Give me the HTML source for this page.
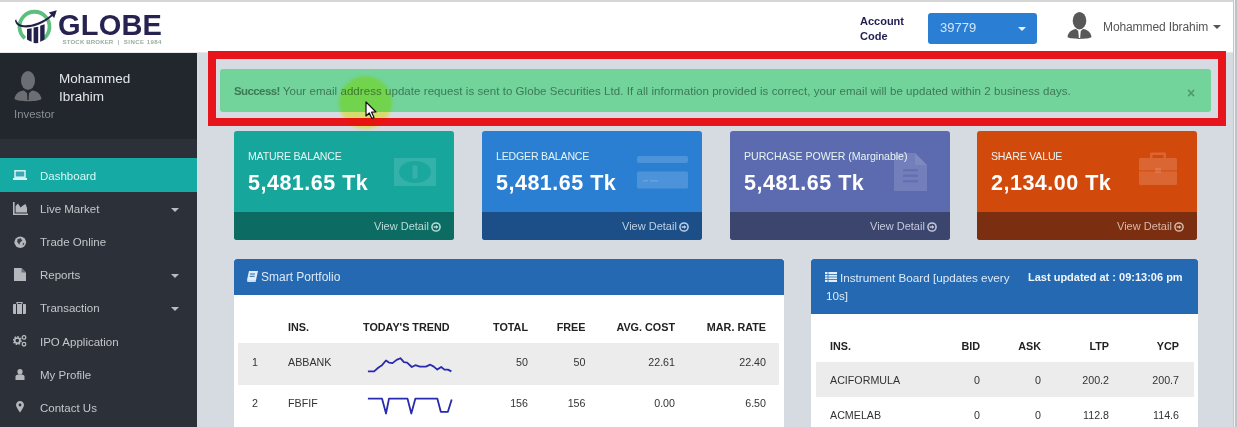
<!DOCTYPE html>
<html><head><meta charset="utf-8">
<style>
*{box-sizing:border-box;margin:0;padding:0}
html,body{width:1237px;height:427px;overflow:hidden;background:#d6dbe1;font-family:"Liberation Sans",sans-serif}
.abs{position:absolute}
.t{position:absolute;white-space:nowrap;line-height:1}
#topline{left:0;top:0;width:1237px;height:2px;background:#d6d6d6}
#header{left:0;top:2px;width:1234px;height:51px;background:#fff;border-bottom:1px solid #e4e6e9}
#sb{left:0;top:53px;width:197px;height:374px;background:#2c3139}
#sbuser{left:0;top:53px;width:197px;height:86px;background:#22272d}
#scroll{left:1235px;top:0;width:2px;height:427px;background:#bfc3c8}
#scrollline{left:1233px;top:0;width:2px;height:427px;background:#f2f3f5;border-left:1px solid #c3c8ce}
.menu{color:#c3c6ca;font-size:11.5px}
.mi{position:absolute;left:13px}
.caret{position:absolute;width:0;height:0;border-left:4px solid transparent;border-right:4px solid transparent;border-top:4px solid #b9bdc2}
.card .lbl{color:#e6f4f2;font-size:10.6px;letter-spacing:-0.2px}
.val{color:#fff;font-size:21.5px;font-weight:700;letter-spacing:0.5px}
.vd{color:#c9d6d6;font-size:11px}
.th{color:#222;font-size:10.8px;font-weight:700}
.td{color:#333;font-size:10.7px}
</style></head><body>
<div id="topline" class="abs"></div>
<div id="header" class="abs"></div>
<div id="sb" class="abs"></div>
<div id="sbuser" class="abs"></div>
<div id="scrollline" class="abs"></div>
<div id="scroll" class="abs"></div>

<!-- LOGO -->
<svg class="abs" style="left:0;top:0" width="60" height="50" viewBox="0 0 60 50">
  <path d="M24.9 38.3 A15 15 0 1 1 44.1 38.3" fill="none" stroke="#5cbf7e" stroke-width="3.8"/>
  <path d="M27 29 L31.6 28.2 L31.6 41.8 Q29 41 27 39.5 Z" fill="#22204a"/>
  <path d="M33.6 27.6 L38.2 26.8 L38.2 43 Q35.8 43.3 33.6 43 Z" fill="#22204a"/>
  <path d="M40.2 25.8 L44.6 24.2 L44.6 39.8 Q42.6 41 40.2 41.8 Z" fill="#22204a"/>
  <path d="M16.2 19.2 C17 27.5 34 28.5 51.5 14.5 L52.6 16 C35 31 16 30 15 20.5 Z" fill="#22204a"/>
  <path d="M56.8 10.2 L48.8 12.6 L54.2 18 Z" fill="#22204a"/>
</svg>
<div class="t" style="left:58px;top:11px;font-size:29px;font-weight:700;color:#262350;letter-spacing:0.2px">GLOBE</div>
<div class="t" style="left:62.6px;top:38.8px;font-size:6.1px;color:#96ad9e;letter-spacing:0.12px;font-weight:700">STOCK BROKER</div>
<div class="t" style="left:117.5px;top:38.8px;font-size:6.1px;color:#a5b3ab;font-weight:700">|</div>
<div class="t" style="left:123.8px;top:38.8px;font-size:6.1px;color:#96ad9e;letter-spacing:0.42px;font-weight:700">SINCE 1984</div>

<!-- Account code -->
<div class="t" style="left:860px;top:14px;font-size:11px;font-weight:700;color:#211d52;line-height:15px">Account<br>Code</div>
<div class="abs" style="left:928px;top:13px;width:109px;height:31px;background:#2a7fd4;border-radius:3px"></div>
<div class="t" style="left:940px;top:21px;font-size:13px;color:#d3e5f7">39779</div>
<div class="caret" style="left:1018px;top:27px;border-top-color:#e8f0fa;border-left-width:4px;border-right-width:4px;border-top-width:4px"></div>

<!-- user avatar header -->
<svg class="abs" style="left:1067px;top:11px" width="25" height="30" viewBox="0 0 25 30">
  <ellipse cx="12.5" cy="9.7" rx="6.8" ry="8.7" fill="#585858"/>
  <path d="M0.5 26 C1 21, 5 18.5, 9 18 L12.5 21 L16 18 C20 18.5, 24 21, 24.5 26 C22 28.5, 3 28.5, 0.5 26 Z" fill="#585858"/>
  <path d="M11.3 19.5 L13.7 19.5 L13.2 27 L11.8 27 Z" fill="#fff"/>
</svg>
<div class="t" style="left:1103px;top:21px;font-size:12px;color:#555;letter-spacing:-0.1px">Mohammed Ibrahim</div>
<div class="caret" style="left:1213px;top:25px;border-top-color:#555"></div>

<!-- SIDEBAR user -->
<svg class="abs" style="left:14px;top:71px" width="28" height="32" viewBox="0 0 28 32">
  <ellipse cx="14" cy="9.5" rx="7" ry="9.5" fill="#6b6e72"/>
  <path d="M0.5 28 C1 23, 5 20, 10 19.5 L14 23 L18 19.5 C23 20, 27 23, 27.5 28 C25 31, 3 31, 0.5 28 Z" fill="#6b6e72"/>
  <path d="M13 21 L15 21 L14.6 29 L13.4 29 Z" fill="#22272d"/>
</svg>
<div class="t" style="left:59px;top:70px;font-size:13.5px;color:#e3e5e8;line-height:18px">Mohammed<br>Ibrahim</div>
<div class="t" style="left:14px;top:109px;font-size:11.4px;color:#8a8e93">Investor</div>

<!-- SIDEBAR menu -->
<div class="abs" style="left:0;top:158px;width:197px;height:34px;background:#15aaa3"></div>
<svg class="abs" style="left:13px;top:170px" width="14" height="10" viewBox="0 0 14 10">
  <rect x="2" y="0.8" width="10" height="6.4" fill="#3aa7b5" stroke="#d5f4f4" stroke-width="1.5"/>
  <rect x="0" y="8" width="14" height="2" fill="#d5f4f4"/>
</svg>
<div class="t menu" style="left:40px;top:171px;color:#d9f6f6">Dashboard</div>

<svg class="abs" style="left:13px;top:201.5px" width="15" height="13" viewBox="0 0 15 13"><path d="M0 0 L1.6 0 L1.6 11.4 L15 11.4 L15 13 L0 13Z M2.6 10.6 L2.6 4 L5 1.5 L7.5 5.5 L10 3.5 L12.5 2 L14 6 L14 10.6 Z" fill="#b4b8bd"/></svg>
<div class="t menu" style="left:40px;top:204.1px">Live Market</div>
<div class="caret" style="left:171px;top:208px"></div>

<svg class="abs" style="left:14px;top:236px" width="12.5" height="12.5" viewBox="0 0 12 12"><circle cx="6" cy="6" r="5.6" fill="#b4b8bd"/><path d="M3.5 2.8 L6.5 2.2 L8 4.5 L6 6 L5 8.5 L3 5.5 Z M8.5 6.5 L10 7 L8.5 9.5 Z" fill="#3a3f47"/></svg>
<div class="t menu" style="left:40px;top:237.2px">Trade Online</div>

<svg class="abs" style="left:14px;top:267.5px" width="12" height="13.5" viewBox="0 0 12 13.5"><path d="M0 0 L7.5 0 L12 4.5 L12 13.5 L0 13.5 Z" fill="#b4b8bd"/><path d="M7.5 0 L7.5 4.5 L12 4.5 Z" fill="#6d7278"/></svg>
<div class="t menu" style="left:40px;top:270.3px">Reports</div>
<div class="caret" style="left:171px;top:274px"></div>

<svg class="abs" style="left:13px;top:302px" width="13" height="12" viewBox="0 0 13 12"><path d="M4 2 L4 0.5 L9 0.5 L9 2" fill="none" stroke="#b4b8bd" stroke-width="1.2"/><rect x="0" y="2" width="13" height="10" rx="1" fill="#b4b8bd"/><rect x="3" y="2" width="1" height="10" fill="#2b3038"/><rect x="9" y="2" width="1" height="10" fill="#2b3038"/></svg>
<div class="t menu" style="left:40px;top:303.4px">Transaction</div>
<div class="caret" style="left:171px;top:307px"></div>

<svg class="abs" style="left:13px;top:335px" width="14" height="12" viewBox="0 0 14 12"><circle cx="4.3" cy="5.6" r="3.4" fill="none" stroke="#b4b8bd" stroke-width="2.2" stroke-dasharray="1.5 1.1"/><circle cx="4.3" cy="5.6" r="2.6" fill="none" stroke="#b4b8bd" stroke-width="1.6"/><circle cx="11" cy="2.4" r="1.8" fill="none" stroke="#b4b8bd" stroke-width="1.3"/><circle cx="11" cy="9.2" r="1.8" fill="none" stroke="#b4b8bd" stroke-width="1.3"/></svg>
<div class="t menu" style="left:40px;top:336.5px">IPO Application</div>

<svg class="abs" style="left:15px;top:368.5px" width="10" height="11" viewBox="0 0 10 11"><ellipse cx="5" cy="2.8" rx="2.6" ry="2.8" fill="#b4b8bd"/><path d="M0.5 11 L0.5 7.6 C0.5 6.2 2 5.4 3.3 5.4 L6.7 5.4 C8 5.4 9.5 6.2 9.5 7.6 L9.5 11 Z" fill="#b4b8bd"/></svg>
<div class="t menu" style="left:40px;top:369.6px">My Profile</div>

<svg class="abs" style="left:16px;top:401px" width="8" height="11.5" viewBox="0 0 9 13"><path d="M4.5 0 C7 0 9 2 9 4.5 C9 7 4.5 13 4.5 13 C4.5 13 0 7 0 4.5 C0 2 2 0 4.5 0 Z" fill="#b4b8bd"/><circle cx="4.5" cy="4.5" r="1.6" fill="#2b3038"/></svg>
<div class="t menu" style="left:40px;top:402.7px">Contact Us</div>

<!-- red box -->
<div class="abs" style="left:208px;top:51px;width:1018px;height:75px;border:8px solid #e8141c"></div>
<!-- alert -->
<div class="abs" style="left:220px;top:69px;width:991px;height:43px;background:#72d39b;border-radius:3px"></div>
<div class="t" style="left:234px;top:86px;font-size:11.5px;letter-spacing:0.055px;color:#3b7a55"><b style="letter-spacing:-0.6px">Success!</b> Your email address update request is sent to Globe Securities Ltd. If all information provided is correct, your email will be updated within 2 business days.</div>
<div class="t" style="left:1187px;top:86px;font-size:14px;color:#4d9a6b;font-weight:700">×</div>

<!-- cards -->
<div class="abs" style="left:234px;top:131px;width:220px;height:109px;background:#16a69c;border-radius:3px;overflow:hidden"><div style="position:absolute;left:0;top:81px;width:220px;height:28px;background:#0c6b63"></div></div>
<div class="t card" style="left:248px;top:147px"><span class="lbl">MATURE BALANCE</span></div>
<div class="t val" style="left:248px;top:172.6px">5,481.65 Tk</div>
<div class="t vd" style="left:374px;top:221px;color:#b9dcd8">View Detail</div>

<div class="abs" style="left:482px;top:131px;width:220px;height:109px;background:#2b7fd3;border-radius:3px;overflow:hidden"><div style="position:absolute;left:0;top:81px;width:220px;height:28px;background:#1c4f88"></div></div>
<div class="t card" style="left:496px;top:147px"><span class="lbl">LEDGER BALANCE</span></div>
<div class="t val" style="left:496px;top:172.6px">5,481.65 Tk</div>
<div class="t vd" style="left:622px;top:221px;color:#bcd0e6">View Detail</div>

<div class="abs" style="left:730px;top:131px;width:220px;height:109px;background:#5c6baf;border-radius:3px;overflow:hidden"><div style="position:absolute;left:0;top:81px;width:220px;height:28px;background:#3c456d"></div></div>
<div class="t card" style="left:744px;top:147px"><span class="lbl" style="letter-spacing:-0.03px">PURCHASE POWER (Marginable)</span></div>
<div class="t val" style="left:744px;top:172.6px">5,481.65 Tk</div>
<div class="t vd" style="left:870px;top:221px;color:#c5c9dc">View Detail</div>

<div class="abs" style="left:977px;top:131px;width:220px;height:109px;background:#d2490c;border-radius:3px;overflow:hidden"><div style="position:absolute;left:0;top:81px;width:220px;height:28px;background:#7b2e10"></div></div>
<div class="t card" style="left:991px;top:147px"><span class="lbl">SHARE VALUE</span></div>
<div class="t val" style="left:991px;top:172.6px">2,134.00 Tk</div>
<div class="t vd" style="left:1117px;top:221px;color:#d9b9a9">View Detail</div>

<!-- panels -->
<div class="abs" style="left:234px;top:259px;width:550px;height:168px;background:#fff"></div>
<div class="abs" style="left:234px;top:259px;width:550px;height:36px;background:#2469b1;border-radius:3px 3px 0 0"></div>
<div class="t" style="left:261px;top:271px;font-size:12px;color:#dde9f6">Smart Portfolio</div>

<div class="abs" style="left:811px;top:259px;width:387px;height:168px;background:#fff"></div>
<div class="abs" style="left:811px;top:259px;width:387px;height:55px;background:#2469b1;border-radius:3px 3px 0 0"></div>
<div class="t" style="left:840px;top:271.5px;font-size:11.7px;color:#dde9f6">Instrument Board [updates every</div>
<div class="t" style="left:826px;top:290px;font-size:11.7px;color:#dde9f6">10s]</div>
<div class="t" style="left:1028px;top:271.5px;font-size:11px;font-weight:700;color:#f0f5fa">Last updated at : 09:13:06 pm</div>


<!-- card icons -->
<svg class="abs" style="left:394px;top:158px" width="42" height="28" viewBox="0 0 42 28">
  <rect x="0" y="0" width="42" height="28" fill="#fff" opacity="0.13"/>
  <ellipse cx="21" cy="14" rx="16" ry="11" fill="#16a69c" opacity="0.85"/>
  <path d="M18.5 8 Q21 6.5 23.5 8 L23.5 20 Q21 21.5 18.5 20 Z" fill="#fff" opacity="0.12"/>
</svg>
<svg class="abs" style="left:637px;top:156px" width="51" height="33" viewBox="0 0 51 33">
  <rect x="0" y="0" width="51" height="7" rx="2" fill="#fff" opacity="0.16"/>
  <rect x="0" y="15.5" width="51" height="17" rx="1.5" fill="#fff" opacity="0.16"/>
  <rect x="6" y="24" width="5" height="1.5" fill="#fff" opacity="0.15"/>
  <rect x="13" y="24" width="8" height="1.5" fill="#fff" opacity="0.15"/>
</svg>
<svg class="abs" style="left:894px;top:153px" width="33" height="38" viewBox="0 0 33 38">
  <path d="M0 0 L21 0 L33 12 L33 38 L0 38 Z" fill="#fff" opacity="0.14"/>
  <path d="M21 0 L21 12 L33 12 Z" fill="#fff" opacity="0.08"/>
  <rect x="9" y="16" width="15" height="2.4" fill="#5c6baf" opacity="0.7"/>
  <rect x="9" y="21.5" width="15" height="2.4" fill="#5c6baf" opacity="0.7"/>
  <rect x="9" y="27" width="15" height="2.4" fill="#5c6baf" opacity="0.7"/>
</svg>
<svg class="abs" style="left:1139px;top:152px" width="38" height="34" viewBox="0 0 38 34">
  <path d="M11 6 L11 1.5 Q11 0.5 12 0.5 L26 0.5 Q27 0.5 27 1.5 L27 6 L24.5 6 L24.5 3 L13.5 3 L13.5 6 Z" fill="#fff" opacity="0.16"/>
  <rect x="0" y="6" width="38" height="27" rx="1.5" fill="#fff" opacity="0.16"/>
  <rect x="0" y="18" width="38" height="1.6" fill="#d2490c" opacity="0.6"/>
  <rect x="16" y="16" width="6" height="5" fill="#fff" opacity="0.12"/>
</svg>

<!-- view detail circles -->
<svg class="abs" style="left:431px;top:222px" width="10" height="10" viewBox="0 0 10 10"><circle cx="5" cy="5" r="4.1" fill="none" stroke="#b9dcd8" stroke-width="1.5"/><path d="M7.4 5 L5 2.9 L5 4.3 L2.7 4.3 L2.7 5.7 L5 5.7 L5 7.1 Z" fill="#b9dcd8"/></svg>
<svg class="abs" style="left:679px;top:222px" width="10" height="10" viewBox="0 0 10 10"><circle cx="5" cy="5" r="4.1" fill="none" stroke="#bcd0e6" stroke-width="1.5"/><path d="M7.4 5 L5 2.9 L5 4.3 L2.7 4.3 L2.7 5.7 L5 5.7 L5 7.1 Z" fill="#bcd0e6"/></svg>
<svg class="abs" style="left:927px;top:222px" width="10" height="10" viewBox="0 0 10 10"><circle cx="5" cy="5" r="4.1" fill="none" stroke="#c5c9dc" stroke-width="1.5"/><path d="M7.4 5 L5 2.9 L5 4.3 L2.7 4.3 L2.7 5.7 L5 5.7 L5 7.1 Z" fill="#c5c9dc"/></svg>
<svg class="abs" style="left:1174px;top:222px" width="10" height="10" viewBox="0 0 10 10"><circle cx="5" cy="5" r="4.1" fill="none" stroke="#d9b9a9" stroke-width="1.5"/><path d="M7.4 5 L5 2.9 L5 4.3 L2.7 4.3 L2.7 5.7 L5 5.7 L5 7.1 Z" fill="#d9b9a9"/></svg>

<!-- panel icons -->
<svg class="abs" style="left:247px;top:271px" width="11" height="11" viewBox="0 0 11 11"><path d="M2 0 L11 0 L9 9 L0 9 Z" fill="#e4eef8"/><path d="M0 9 L9 9 L8.6 11 L0.4 11 Z" fill="#cfdff0"/><rect x="3" y="2.5" width="5" height="1" fill="#2469b1"/><rect x="2.6" y="4.8" width="5" height="1" fill="#2469b1"/></svg>
<svg class="abs" style="left:825px;top:272px" width="12" height="10" viewBox="0 0 12 10"><rect x="0" y="0" width="12" height="10" fill="#e4eef8"/><rect x="0" y="2.2" width="12" height="0.8" fill="#2469b1"/><rect x="0" y="4.6" width="12" height="0.8" fill="#2469b1"/><rect x="0" y="7" width="12" height="0.8" fill="#2469b1"/><rect x="2.6" y="0" width="0.8" height="10" fill="#2469b1"/></svg>

<!-- smart portfolio table -->
<div class="abs" style="left:238px;top:343px;width:541px;height:42px;background:#ececec"></div>
<div class="t th" style="left:288px;top:321.5px">INS.</div>
<div class="t th" style="left:363px;top:321.5px">TODAY'S TREND</div>
<div class="t th" style="left:428px;top:321.5px;width:100px;text-align:right">TOTAL</div>
<div class="t th" style="left:485.5px;top:321.5px;width:100px;text-align:right">FREE</div>
<div class="t th" style="left:575px;top:321.5px;width:100px;text-align:right">AVG. COST</div>
<div class="t th" style="left:666px;top:321.5px;width:100px;text-align:right">MAR. RATE</div>

<div class="t td" style="left:252px;top:357px">1</div>
<div class="t td" style="left:288px;top:357px">ABBANK</div>
<div class="t td" style="left:428px;top:357px;width:100px;text-align:right">50</div>
<div class="t td" style="left:485.5px;top:357px;width:100px;text-align:right">50</div>
<div class="t td" style="left:575px;top:357px;width:100px;text-align:right">22.61</div>
<div class="t td" style="left:666px;top:357px;width:100px;text-align:right">22.40</div>

<div class="t td" style="left:252px;top:398px">2</div>
<div class="t td" style="left:288px;top:398px">FBFIF</div>
<div class="t td" style="left:428px;top:398px;width:100px;text-align:right">156</div>
<div class="t td" style="left:485.5px;top:398px;width:100px;text-align:right">156</div>
<div class="t td" style="left:575px;top:398px;width:100px;text-align:right">0.00</div>
<div class="t td" style="left:666px;top:398px;width:100px;text-align:right">6.50</div>

<svg class="abs" style="left:360px;top:345px" width="100" height="75" viewBox="0 0 100 75">
<polyline fill="none" stroke="#2a2aae" stroke-width="1.8" stroke-linejoin="round" points="7.9,26.4 14.1,26.4 18.5,22.5 22,20.2 26,15.5 29,17.6 32.5,18.1 36.6,14.9 40.4,13.2 43.9,17.2 47.1,17.6 51.8,22 55.4,20.2 59.8,21.6 65.9,21.6 70.3,19.7 73.8,21.6 77.3,24.6 81.2,22 84.4,24.6 87.9,24.6 91.4,26.4"/>
<polyline fill="none" stroke="#2a2aae" stroke-width="1.8" stroke-linejoin="round" points="7.9,53.6 22,53.6 26,68.5 29,53.6 47.5,53.6 51.3,68.5 55.4,53.6 77.3,53.6 80.8,66.8 87.9,66.8 91.7,54.5"/>
</svg>

<!-- instrument board table -->
<div class="abs" style="left:816px;top:362px;width:378px;height:35px;background:#ececec"></div>
<div class="t th" style="left:830px;top:341px">INS.</div>
<div class="t th" style="left:880px;top:341px;width:100px;text-align:right">BID</div>
<div class="t th" style="left:941px;top:341px;width:100px;text-align:right">ASK</div>
<div class="t th" style="left:1009px;top:341px;width:100px;text-align:right">LTP</div>
<div class="t th" style="left:1079px;top:341px;width:100px;text-align:right">YCP</div>

<div class="t td" style="left:830px;top:375px">ACIFORMULA</div>
<div class="t td" style="left:880px;top:375px;width:100px;text-align:right">0</div>
<div class="t td" style="left:941px;top:375px;width:100px;text-align:right">0</div>
<div class="t td" style="left:1009px;top:375px;width:100px;text-align:right">200.2</div>
<div class="t td" style="left:1079px;top:375px;width:100px;text-align:right">200.7</div>

<div class="t td" style="left:830px;top:410px">ACMELAB</div>
<div class="t td" style="left:880px;top:410px;width:100px;text-align:right">0</div>
<div class="t td" style="left:941px;top:410px;width:100px;text-align:right">0</div>
<div class="t td" style="left:1009px;top:410px;width:100px;text-align:right">112.8</div>
<div class="t td" style="left:1079px;top:410px;width:100px;text-align:right">114.6</div>

<!-- cursor highlight -->
<div class="abs" style="left:339px;top:76px;width:53px;height:53px;border-radius:50%;background:#ffff00;opacity:0.5;mix-blend-mode:multiply;filter:blur(1.5px)"></div>
<svg class="abs" style="left:365px;top:101px" width="13" height="19" viewBox="0 0 13 19">
<path d="M1 1 L1 15 L4.3 12 L6.8 17.5 L9 16.5 L6.6 11.2 L11 11 Z" fill="#fff" stroke="#111" stroke-width="1.2" stroke-linejoin="round"/>
</svg>
</body></html>
